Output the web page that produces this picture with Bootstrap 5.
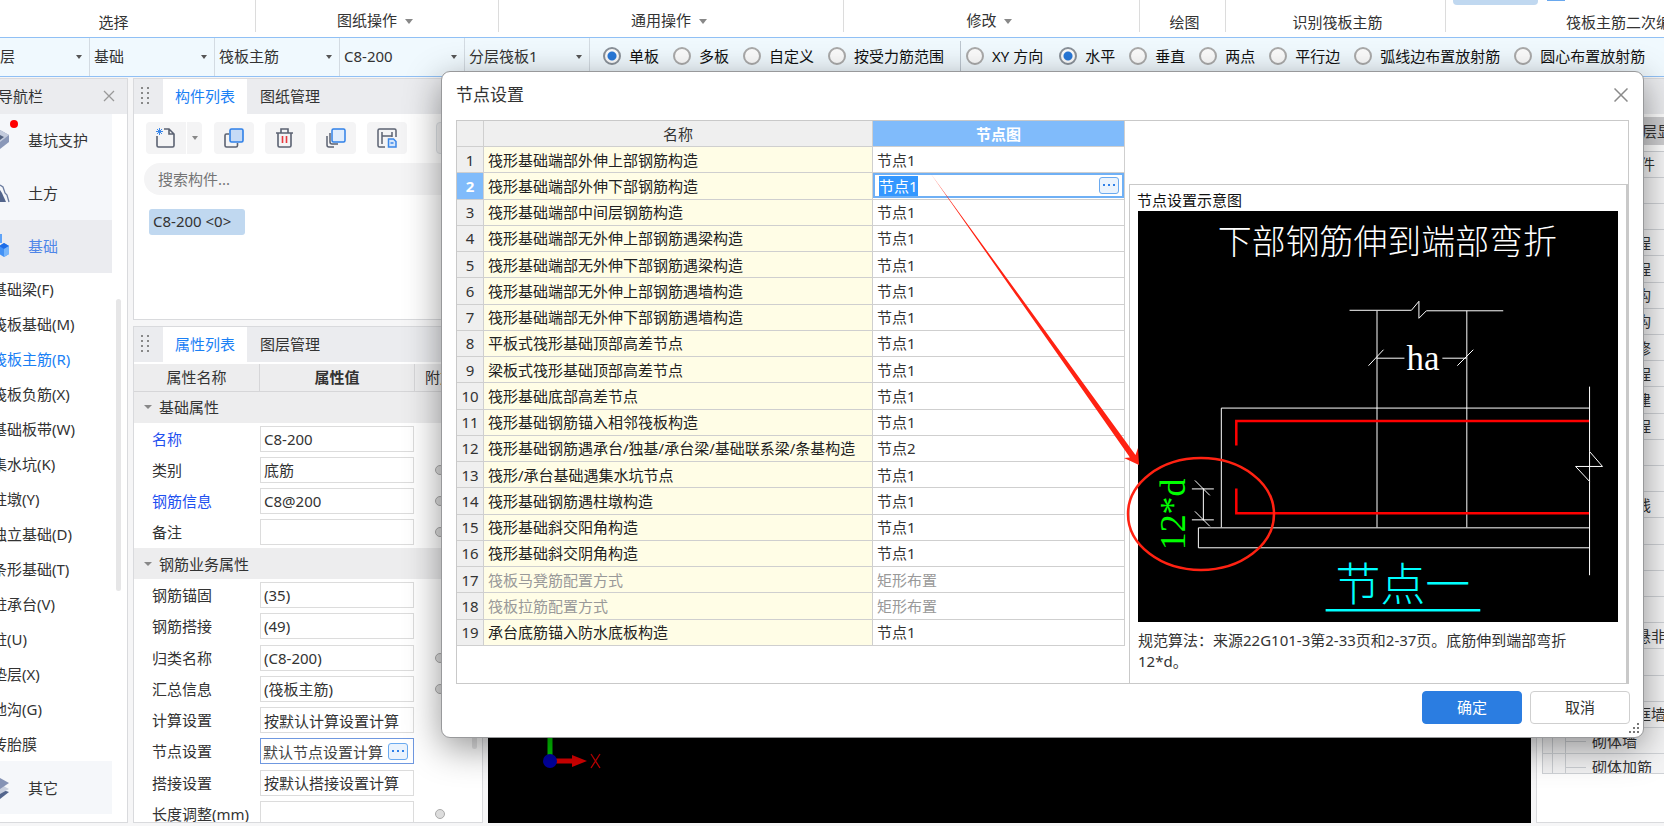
<!DOCTYPE html>
<html lang="zh-CN">
<head>
<meta charset="utf-8">
<meta name="viewport" content="width=device-width, initial-scale=1">
<title>节点设置</title>
<link href="https://cdn.jsdelivr.net/npm/bootstrap@5.3.0/dist/css/bootstrap.min.css" rel="stylesheet">
<style>
body{font-family:"Noto Sans","Noto Sans CJK SC",sans-serif;font-size:15px;line-height:20px;color:#333;background:#f6f6f7;overflow:hidden}
button,input,select{font:inherit;color:inherit}
.ribbon{height:37px;background:#fff}
.ribbon-group{height:32px;border-right:1px solid #dcdcdc;padding:10px 4px 0 0;flex:none;white-space:nowrap;overflow:hidden}
.ribbon-group.low{padding-top:12px}
.tri{display:inline-block;border:4px solid transparent;border-top:5px solid #888;border-bottom:0;flex:none}
.ribbon .tri{margin:0 0 2px 4px}
.ribbon-tab{position:absolute;left:7px;top:0;width:85px;height:5px;background:#c0d8f0;border-radius:0 0 4px 4px}
.ribbon-dots{position:absolute;left:101px;top:0;width:18px;height:1px;background:#69a8ee}
.optbar{height:40px;background:#f0f9fe;border-top:1px solid #90c0f5;border-bottom:1px solid #90c0f5;white-space:nowrap;overflow:hidden}
.combo{flex:none;width:125px;height:38px;border:0;border-right:1px solid #d3dbe2;padding:0 4px 1px;appearance:none;background:transparent url("data:image/svg+xml,%3Csvg xmlns='http://www.w3.org/2000/svg' width='6' height='4'%3E%3Cpath d='M0 0h6L3 4z' fill='%23555'/%3E%3C/svg%3E") no-repeat right 7px center}
.optset{padding:0 0 2px 13px}
.opt{display:flex;align-items:center;margin-right:14px;color:#111}
.opt input{flex:none;width:18px;height:18px;margin:0 8px 0 0;border:2px solid #aaa;background:#fbfbfb;box-shadow:none}
.opt .form-check-input:checked{background:radial-gradient(circle,#2878d8 0 4px,#fbfbfb 5px);border-color:#8a9199}
.opt-split{border-left:1px solid #bcc6cf;margin:3px 5px 0 2px;align-self:stretch}
.workspace{min-height:0;padding:1px 0 3px}
.pane{background:#fff;border:1px solid #d9dadd;overflow:hidden}
.pane-head{height:35px;background:#ebecef;flex:none;white-space:nowrap}
.navpane{width:128px;border-left:0;flex:none;margin-right:5px}
.plainx{border:0;background:none;padding:0;line-height:0}
.big-item{display:flex;align-items:center;height:53px;margin-right:15px;background:#f5f7fa;color:#333;text-decoration:none;position:relative}
.big-item svg{width:10px;height:24px;margin-right:18px;flex:none}
.big-item.on{background:#ebecf0;color:#4f86e8}
.hotdot{position:absolute;left:10px;top:6px;width:8px;height:8px;border-radius:50%;background:#f00}
.sublist{position:relative;flex:1 1 0;overflow:hidden}
.sublist a{display:block;height:35px;line-height:32px;margin-left:-8px;color:#333;text-decoration:none;white-space:nowrap}
.sublist a.on{color:#1a80f5}
.thumb{position:absolute;background:#e6e6e7;border-radius:3px;width:5px}
.midcol{width:350px;flex:none;margin-right:5px}
.grip{width:29px;flex:none;display:flex;align-items:center;justify-content:center;padding-right:6px}
.tabx{border:0;background:none;height:35px;padding:0 12px 1px}
.tabx.on{background:#fff;color:#1a80f5;margin-right:1px}
.comp-pane{height:242px;flex:none;margin-bottom:6px}
.toolbar-row{padding:8px 0 9px 12px}
.toolbtn{border:0;border-radius:4px;background:#f4f4f5;width:40px;height:32px;padding:0;display:flex;align-items:center;justify-content:center;flex:none}
.search{height:32px;border:0;border-radius:16px;background:#f4f4f5;padding:0 14px;width:100%}
.search::placeholder{color:#757575;opacity:1}
.chip{background:#c0d8f0;border-radius:3px;height:26px;line-height:25px;padding:0 4px;width:96px;white-space:nowrap;margin:14px 0 0 15px}
.props{width:348px;height:466px;table-layout:fixed;border-collapse:separate;border-spacing:0;margin-top:2px}
.props td,.props th{padding:0;vertical-align:middle;white-space:nowrap}
.props td{height:31px}
.props thead th{background:#ededee;height:28px;border-right:1px solid #d6d6d8;border-bottom:1px solid #d6d6d8;font-weight:400;text-align:center}
.props .grp td{background:#ededee;padding-left:10px}
.props .grp .tri{border-width:4px 4px 0;margin:0 7px 4px 0;vertical-align:middle}
.props label{padding-left:18px;display:block}
.props .key label{color:#1f50f0}
.props input[type=text]{display:block;width:154px;height:26px;border:1px solid #dcdcdc;padding:0 3px;background:#fff}
.picked{display:flex;align-items:center;width:154px;height:26px;border:1px solid #6f98e0;background:#fff}
.props .picked input[type=text]{border:0;height:22px;width:127px;flex:none;padding:0 0 0 2px;color:#444}
.morebtn{width:20px;height:17px;border:1px solid #6aaaf0;border-radius:3px;background:#eaf3fd;color:#3080e0;padding:0;display:flex;align-items:center;justify-content:center;flex:none}
.ring{display:block;width:10px;height:10px;border-radius:50%;border:1px solid #aaa;background:#ddd;margin-left:20px}
.canvas3d{background:#000;min-width:0}
.treepane{width:128px;flex:none;margin-left:5px;border-right:0}
.tree{margin:6px 0 0 5px;border:1px solid #cfd2d6;border-right:0;height:623px;display:grid;grid-template-rows:repeat(24,calc((100% + 8px) / 24));background:#f7f7f8;overflow:hidden}
.tree div{border-bottom:1px solid #d0d3d7;padding-left:93px;white-space:nowrap;overflow:hidden;display:flex;align-items:center}
.tree div.leaf{padding-left:0;background:#f4f4f5}
.leaf svg{flex:none;width:49px;height:26px}
.layerbar{background:#cfcfd1;height:28px;line-height:28px;margin-top:3px;padding-left:105px;white-space:nowrap}
.dlg{position:absolute;left:441px;right:20px;top:71px;background:#fff;border:1px solid #98999b;border-radius:9px;box-shadow:0 10px 36px rgba(0,0,0,.42);padding:0 14px 13px 14px;z-index:5}
.dlg-head{height:48px;font-size:17px;padding:0 1px 3px 0}
.dlg-body{border:1px solid #c9c9c9;height:564px}
.nodes{flex:none;width:668px;height:525px;table-layout:fixed;border-collapse:separate;border-spacing:0}
.nodes td,.nodes th{border-right:1px solid #cfcfcf;border-bottom:1px solid #cfcfcf;padding:0 4px;height:26px;white-space:nowrap;vertical-align:middle;line-height:20px}
.nodes thead th{background:#efefef;font-weight:400;text-align:center}
.nodes tbody th{background:#efefef;font-weight:400;text-align:center;padding:0}
.nodes td:nth-child(2){background:#fffde6;color:#222}
.nodes .picked-h{background:#80bbfb!important;color:#fff;font-weight:700!important}
.nodes .dim td{color:#999!important}
.nodes .editing{padding:0}
.cell-edit{display:flex;align-items:center;border:2px solid #6fb0f5;height:25px;padding-right:3px}
.cell-edit input{flex:1;min-width:0;border:0;outline:0;padding:0 4px;height:20px}
.cell-edit input::selection{background:#3397ff;color:#fff}
.preview{position:relative;flex:1;min-width:0;margin:63px 0 0 4px;border:1px solid #c9c9c9;border-right:2px solid #c9c9c9;border-bottom:0;padding:5px 8px 0}
.preview h2{font-size:15px;line-height:21px;font-weight:400;color:#111;margin:0 0 0 -1px}
.preview p{margin:8px 0 0;padding-right:20px;line-height:21px}
.drawing{display:block;width:100%;aspect-ratio:481/412;background:#000}
.callout{position:absolute;left:-200px;top:-12px;width:350px;height:400px;pointer-events:none}
.dlg .btn{width:100px;height:33px;padding:0;font-size:15px;border-radius:4px}
.btn-ok{background:#2b7de1;color:#fff;border-color:#2b7de1}
.btn-no{background:#fff;border-color:#cfcfcf;color:#333}
.sizer{position:absolute;right:3px;bottom:3px;width:11px;height:11px}
</style>
</head>
<body>
<div class="d-flex flex-column vh-100">

<header class="ribbon d-flex overflow-hidden">
  <div class="ribbon-group low text-center" style="width:256px;padding-right:28px">选择</div>
  <div class="ribbon-group text-center" style="width:243px">图纸操作 <span class="tri"></span></div>
  <div class="ribbon-group text-center" style="width:345px">通用操作 <span class="tri"></span></div>
  <div class="ribbon-group text-center" style="width:296px">修改 <span class="tri"></span></div>
  <div class="ribbon-group low text-center" style="width:86px;padding-right:0;padding-left:4px">绘图</div>
  <div class="ribbon-group low text-center" style="width:220px;padding-right:0;padding-left:4px">识别筏板主筋</div>
  <div class="ribbon-group low flex-grow-1 border-0 position-relative" style="width:0;padding-left:120px"><span class="ribbon-tab"></span><span class="ribbon-dots"></span>筏板主筋二次编辑</div>
</header>

<div class="optbar d-flex flex-shrink-0">
  <select class="combo" aria-label="楼层" style="width:90px;padding-left:0"><option>层</option></select>
  <select class="combo" aria-label="类型"><option>基础</option></select>
  <select class="combo" aria-label="构件类型"><option>筏板主筋</option></select>
  <select class="combo" aria-label="构件"><option>C8-200</option></select>
  <select class="combo" aria-label="分层"><option>分层筏板1</option></select>
  <div class="optset d-flex">
    <label class="opt"><input class="form-check-input" type="radio" name="range" checked>单板</label>
    <label class="opt"><input class="form-check-input" type="radio" name="range">多板</label>
    <label class="opt"><input class="form-check-input" type="radio" name="range">自定义</label>
    <label class="opt"><input class="form-check-input" type="radio" name="range">按受力筋范围</label>
    <span class="opt-split"></span>
    <label class="opt me-3"><input class="form-check-input" type="radio" name="dir">XY 方向</label>
    <label class="opt"><input class="form-check-input" type="radio" name="dir" checked>水平</label>
    <label class="opt"><input class="form-check-input" type="radio" name="dir">垂直</label>
    <label class="opt"><input class="form-check-input" type="radio" name="dir">两点</label>
    <label class="opt"><input class="form-check-input" type="radio" name="dir">平行边</label>
    <label class="opt"><input class="form-check-input" type="radio" name="dir">弧线边布置放射筋</label>
    <label class="opt"><input class="form-check-input" type="radio" name="dir">圆心布置放射筋</label>
  </div>
</div>

<main class="workspace d-flex flex-grow-1">
  <nav class="pane navpane d-flex flex-column">
    <div class="pane-head d-flex align-items-center justify-content-between" style="padding-right:12px"><span style="margin-left:-2px">导航栏</span>
      <button class="plainx" aria-label="关闭导航栏"><svg width="12" height="12" viewBox="0 0 12 12" stroke="#999" stroke-width="1.3"><path d="M1 1l10 10M11 1L1 11"/></svg></button></div>
    <a href="#" class="big-item"><svg viewBox="0 0 10 24"><path d="M0 2l9 5v7l-9 7z" fill="#8a98b8"/><path d="M0 2l9 5-9 7z" fill="#c3cbdc"/><path d="M0 7l4 2-4 3z" fill="#53627f"/></svg><span class="hotdot"></span>基坑支护</a>
    <a href="#" class="big-item"><svg viewBox="0 0 10 24"><path d="M0 9l2 3 4 9H0z" fill="#53658c"/><path d="M0 4l3 2 2 6 2 2 2 7" stroke="#6a7b9e" fill="none" stroke-width="1.3"/></svg>土方</a>
    <a href="#" class="big-item on"><svg viewBox="0 0 10 24"><path d="M0 0h2v9H0z" fill="#5fa3f8"/><path d="M-1 12l5-3 5 3v8l-5 3-5-3z" fill="#4492f5"/><path d="M-1 12l5-3 5 3-5 3z" fill="#1e6de8"/><path d="M4 15l5-3v8l-5 3z" fill="#78b6fb"/></svg>基础</a>
    <div class="sublist">
      <a href="#">基础梁(F)</a><a href="#">筏板基础(M)</a><a href="#" class="on">筏板主筋(R)</a><a href="#">筏板负筋(X)</a><a href="#">基础板带(W)</a><a href="#">集水坑(K)</a><a href="#">柱墩(Y)</a><a href="#">独立基础(D)</a><a href="#">条形基础(T)</a><a href="#">桩承台(V)</a><a href="#">桩(U)</a><a href="#">垫层(X)</a><a href="#">地沟(G)</a><a href="#">砖胎膜</a>
      <span class="thumb" style="left:116px;top:26px;height:292px"></span>
    </div>
    <a href="#" class="big-item mb-2"><svg viewBox="0 0 10 24"><path d="M0 13l9 3-9 7z" fill="#53658c"/><path d="M0 8l9 5-9 5z" fill="#c8cfde"/><path d="M0 2l9 5-9 6z" fill="#8593b5"/></svg>其它</a>
  </nav>

  <div class="midcol d-flex flex-column">
    <section class="pane comp-pane">
      <div class="pane-head d-flex">
        <span class="grip"><svg width="9" height="19" viewBox="0 0 9 19" fill="#888"><path d="M0 0h2v2H0zM6 0h2v2H6zM0 5h2v2H0zM6 5h2v2H6zM0 10h2v2H0zM6 10h2v2H6zM0 15h2v2H0zM6 15h2v2H6z"/></svg></span>
        <button class="tabx on">构件列表</button><button class="tabx">图纸管理</button>
      </div>
      <div class="toolbar-row d-flex">
        <button class="toolbtn rounded-end-0" aria-label="新建"><svg width="20" height="20" viewBox="0 0 20 20" fill="none" stroke="#5b6272" stroke-width="1.6"><path d="M1 8v9.500q0 1.500 1.500 1.500h14q1.500 0 1.500-1.500V6l-5-5H8M13 1v5h5"/><path d="M1 1l5 5M6 1L1 6M3.500 0v7M0 3.500h7" stroke="#3b87e8" stroke-width="1"/></svg></button>
        <button class="toolbtn rounded-start-0" aria-label="新建选项" style="width:15px;margin:0 12px 0 1px"><span class="tri" style="border-width:4px 3px 0"></span></button>
        <button class="toolbtn" aria-label="复制" style="margin-right:11px"><svg width="20" height="20" viewBox="0 0 20 20" fill="none" stroke-width="1.6"><path d="M5 6H2.500Q1 6 1 7.500v10Q1 19 2.500 19h9.500q1.500 0 1.500-1.500V15" stroke="#5b6272"/><rect x="6" y="1" width="13" height="13" rx="1.500" fill="#c5daf6" stroke="#2f80e8"/></svg></button>
        <button class="toolbtn" aria-label="删除" style="margin-right:11px"><svg width="20" height="20" viewBox="0 0 20 20" fill="none" stroke="#5b6272" stroke-width="1.600"><path d="M1 5h17M6 5V1h7v4M3 5v12.500Q3 19 4.500 19h10q1.500 0 1.500-1.500V5"/><path d="M7.500 8v7M11.500 8v7" stroke="#e8383d"/></svg></button>
        <button class="toolbtn" aria-label="层间复制" style="margin-right:11px"><svg width="20" height="20" viewBox="0 0 20 20" fill="none" stroke="#5b6272" stroke-width="1.500"><path d="M1 8v9q0 2 2 2h5M4 5v9q0 2 2 2h6"/><rect x="6" y="1" width="13" height="13" rx="1.500" fill="#e0edfd" stroke="#2f80e8"/></svg></button>
        <button class="toolbtn" aria-label="存档"><svg width="20" height="20" viewBox="0 0 20 20" fill="none" stroke="#5b6272" stroke-width="1.500"><path d="M8 19H2.500Q1 19 1 17.500v-15Q1 1 2.500 1h15Q19 1 19 2.500V9M5 4v12M15 4v5M5 8h10"/><path d="M11.500 11h5l2.500 2.500V19h-7.500z" stroke="#3b87e8" fill="#d6e7fc"/><path d="M13.500 15h3" stroke="#3b87e8"/></svg></button>
        <button class="toolbtn border" aria-label="更多" style="margin-left:29px"></button>
      </div>
      <div style="padding-left:10px"><input class="search" type="text" aria-label="搜索构件" placeholder="搜索构件..."></div>
      <div class="chip">C8-200 &lt;0&gt;</div>
    </section>

    <section class="pane flex-grow-1 position-relative" style="min-height:0">
      <div class="pane-head d-flex">
        <span class="grip"><svg width="9" height="19" viewBox="0 0 9 19" fill="#888"><path d="M0 0h2v2H0zM6 0h2v2H6zM0 5h2v2H0zM6 5h2v2H6zM0 10h2v2H0zM6 10h2v2H6zM0 15h2v2H0zM6 15h2v2H6z"/></svg></span>
        <button class="tabx on">属性列表</button><button class="tabx">图层管理</button>
      </div>
      <table class="props">
        <colgroup><col style="width:126px"><col style="width:155px"><col></colgroup>
        <thead><tr><th>属性名称</th><th class="fw-bold">属性值</th><th class="text-start" style="padding-left:10px">附加</th></tr></thead>
        <tbody>
        <tr class="grp"><td colspan="3"><span class="tri"></span>基础属性</td></tr>
        <tr class="key"><td><label for="p1">名称</label></td><td><input type="text" id="p1" value="C8-200"></td><td></td></tr>
        <tr><td><label for="p2">类别</label></td><td><input type="text" id="p2" value="底筋"></td><td><span class="ring"></span></td></tr>
        <tr class="key"><td><label for="p3">钢筋信息</label></td><td><input type="text" id="p3" value="C8@200"></td><td><span class="ring"></span></td></tr>
        <tr><td><label for="p4">备注</label></td><td><input type="text" id="p4"></td><td><span class="ring"></span></td></tr>
        <tr class="grp"><td colspan="3"><span class="tri"></span>钢筋业务属性</td></tr>
        <tr><td><label for="p5">钢筋锚固</label></td><td><input type="text" id="p5" value="(35)"></td><td></td></tr>
        <tr><td><label for="p6">钢筋搭接</label></td><td><input type="text" id="p6" value="(49)"></td><td></td></tr>
        <tr><td><label for="p7">归类名称</label></td><td><input type="text" id="p7" value="(C8-200)"></td><td><span class="ring"></span></td></tr>
        <tr><td><label for="p8">汇总信息</label></td><td><input type="text" id="p8" value="(筏板主筋)"></td><td><span class="ring"></span></td></tr>
        <tr><td><label for="p9">计算设置</label></td><td><input type="text" id="p9" value="按默认计算设置计算"></td><td></td></tr>
        <tr><td><label for="p10">节点设置</label></td><td><div class="picked"><input type="text" id="p10" value="默认节点设置计算"><button class="morebtn" aria-label="选择节点"><svg width="12" height="3" fill="#2f80e8"><path d="M0 0h2v2H0zM5 0h2v2H5zM10 0h2v2h-2z"/></svg></button></div></td><td></td></tr>
        <tr><td><label for="p11">搭接设置</label></td><td><input type="text" id="p11" value="按默认搭接设置计算"></td><td></td></tr>
        <tr><td><label for="p12">长度调整(mm)</label></td><td><input type="text" id="p12"></td><td><span class="ring"></span></td></tr>
        </tbody>
      </table>
      <span class="thumb" style="right:5px;top:100px;height:322px"></span>
    </section>
  </div>

  <section class="canvas3d flex-grow-1 d-flex align-items-end">
    <svg class="ms-5" width="70" height="140" viewBox="536 683 70 140"><path d="M550 683v77" stroke="#00c800" stroke-width="5"/><path d="M556 761h20" stroke="#d80000" stroke-width="5"/><path d="M572 755l15 6-15 6z" fill="#d80000"/><circle cx="550" cy="761" r="7" fill="#0000a0"/><path d="M591 754l9 14M600 754l-9 14" stroke="#c80000" stroke-width="1.300"/></svg>
  </section>

  <aside class="pane treepane">
    <div class="pane-head"></div>
    <div class="layerbar">层显</div>
    <div class="tree">
      <div style="padding-left:97px">件</div><div></div><div></div><div>程</div><div>程</div><div>构</div><div>构</div><div>修</div><div>程</div><div>建</div><div>程</div><div></div><div></div><div>线</div><div></div><div></div><div></div><div></div><div>悬非</div><div></div><div></div><div>框墙</div>
      <div class="leaf"><svg fill="none" stroke="#cdd0d4"><path d="M9.500 0v26M22.500 0v26M22 13.500h21"/></svg>砌体墙</div>
      <div class="leaf"><svg fill="none" stroke="#cdd0d4"><path d="M9.500 0v26M22.500 0v26M22 13.500h21"/></svg>砌体加筋</div>
    </div>
  </aside>
</main>
</div>

<div class="dlg" role="dialog" aria-labelledby="dlgTitle">
  <div class="dlg-head d-flex align-items-center justify-content-between">
    <span id="dlgTitle">节点设置</span>
    <button class="plainx" aria-label="关闭"><svg width="14" height="14" viewBox="0 0 14 14" stroke="#8a8a8a" stroke-width="1.500"><path d="M.5.5l13 13M13.500.5l-13 13"/></svg></button>
  </div>
  <div class="dlg-body d-flex">
    <table class="nodes">
      <colgroup><col style="width:27px"><col style="width:389px"><col></colgroup>
      <thead><tr><th></th><th>名称</th><th class="picked-h">节点图</th></tr></thead>
      <tbody>
      <tr><th>1</th><td>筏形基础端部外伸上部钢筋构造</td><td>节点1</td></tr>
      <tr><th class="picked-h">2</th><td>筏形基础端部外伸下部钢筋构造</td><td class="editing"><div class="cell-edit"><input id="nodeEdit" type="text" aria-label="节点图" value="节点1"><button class="morebtn" aria-label="选择节点图"><svg width="12" height="3" fill="#2f80e8"><path d="M0 0h2v2H0zM5 0h2v2H5zM10 0h2v2h-2z"/></svg></button></div></td></tr>
      <tr><th>3</th><td>筏形基础端部中间层钢筋构造</td><td>节点1</td></tr>
      <tr><th>4</th><td>筏形基础端部无外伸上部钢筋遇梁构造</td><td>节点1</td></tr>
      <tr><th>5</th><td>筏形基础端部无外伸下部钢筋遇梁构造</td><td>节点1</td></tr>
      <tr><th>6</th><td>筏形基础端部无外伸上部钢筋遇墙构造</td><td>节点1</td></tr>
      <tr><th>7</th><td>筏形基础端部无外伸下部钢筋遇墙构造</td><td>节点1</td></tr>
      <tr><th>8</th><td>平板式筏形基础顶部高差节点</td><td>节点1</td></tr>
      <tr><th>9</th><td>梁板式筏形基础顶部高差节点</td><td>节点1</td></tr>
      <tr><th>10</th><td>筏形基础底部高差节点</td><td>节点1</td></tr>
      <tr><th>11</th><td>筏形基础钢筋锚入相邻筏板构造</td><td>节点1</td></tr>
      <tr><th>12</th><td>筏形基础钢筋遇承台/独基/承台梁/基础联系梁/条基构造</td><td>节点2</td></tr>
      <tr><th>13</th><td>筏形/承台基础遇集水坑节点</td><td>节点1</td></tr>
      <tr><th>14</th><td>筏形基础钢筋遇柱墩构造</td><td>节点1</td></tr>
      <tr><th>15</th><td>筏形基础斜交阳角构造</td><td>节点1</td></tr>
      <tr><th>16</th><td>筏形基础斜交阴角构造</td><td>节点1</td></tr>
      <tr class="dim"><th>17</th><td>筏板马凳筋配置方式</td><td>矩形布置</td></tr>
      <tr class="dim"><th>18</th><td>筏板拉筋配置方式</td><td>矩形布置</td></tr>
      <tr><th>19</th><td>承台底筋锚入防水底板构造</td><td>节点1</td></tr>
      </tbody>
    </table>
    <section class="preview">
      <h2>节点设置示意图</h2>
      <svg class="drawing" viewBox="0 0 481 412" fill="none" stroke="#fff" stroke-width="1">
        <g stroke="none" fill="#fff">
          <text x="80" y="43" font-size="34" font-weight="300" font-family="'Noto Sans CJK SC',sans-serif">下部钢筋伸到端部弯折</text>
          <text x="269" y="159" font-size="35" font-family="'Liberation Serif',serif">ha</text>
          <text transform="translate(47 340) rotate(-90)" font-size="36" fill="#0f0" font-family="'Liberation Serif',serif">12*d</text>
          <text x="198" y="391" font-size="45" font-weight="300" fill="#0ff" font-family="'Noto Sans CJK SC',sans-serif">节点一</text>
        </g>
        <path d="M212 99.500h62l7.500-9v17l7.500-7.500h77M239.500 100v217M329.500 100v217M239 147.500h28M305 147.500h24M231 155l15-16M320 155l16-16"/>
        <path d="M452 197.500H83.500V317M60.500 317.500H452M452 337.500H60.500v-20M452.500 176v65l13 15h-27l14 15v94M452.500 241v30"/>
        <path d="M65.500 278v32M54 278.500h22M54 309.500h22M57 270l15 15M57 301l15 15"/>
        <path d="M452 210.500H98.500V235M98.500 278v25H452" stroke="#f00" stroke-width="2.500"/>
        <path d="M188 400h155" stroke="#0ff" stroke-width="2.500"/>
      </svg>
      <p>规范算法：来源22G101-3第2-33页和2-37页。底筋伸到端部弯折12*d。</p>
      <svg class="callout" viewBox="930 172 350 400"><path d="M931 173L1135.500 454l2.500-7 1 17-15-7 6-.5z" fill="#ff2212"/><ellipse cx="1201" cy="513" rx="73" ry="56" fill="none" stroke="#ff2212" stroke-width="2.500"/></svg>
    </section>
  </div>
  <div class="d-flex justify-content-end gap-2" style="margin:7px -1px 0 0">
    <button class="btn btn-ok">确定</button>
    <button class="btn btn-no">取消</button>
  </div>
  <svg class="sizer" viewBox="0 0 11 11" fill="#777"><path d="M8 0h2v2H8zM4 4h2v2H4zM8 4h2v2H8zM0 8h2v2H0zM4 8h2v2H4zM8 8h2v2H8z"/></svg>
</div>

<script src="https://cdn.jsdelivr.net/npm/bootstrap@5.3.0/dist/js/bootstrap.bundle.min.js"></script>
<script>
const edit = document.getElementById('nodeEdit');
edit.focus({preventScroll: true});
edit.select();
</script>
</body>
</html>
